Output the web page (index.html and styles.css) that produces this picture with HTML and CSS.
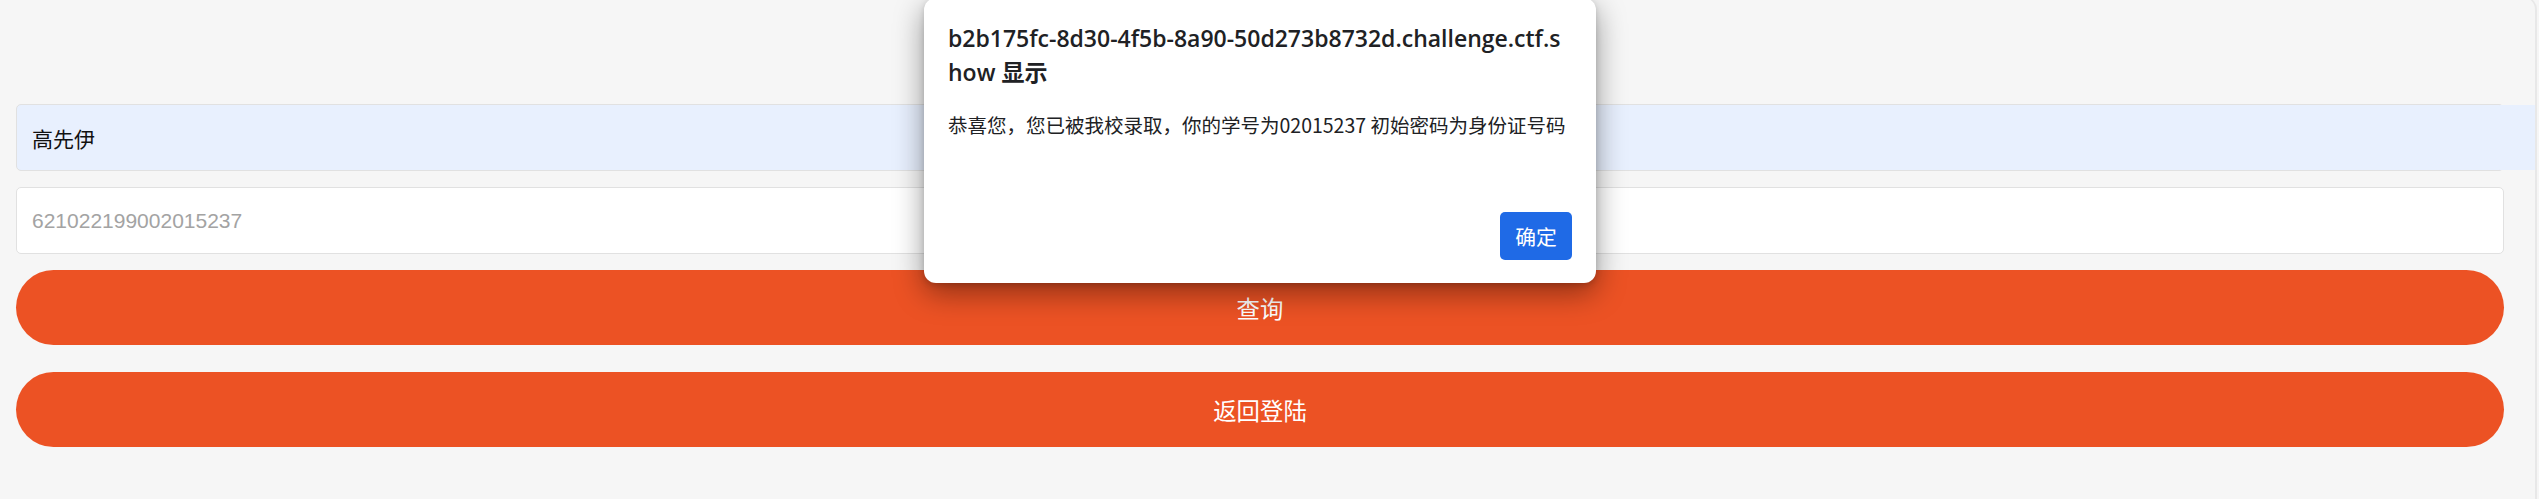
FILE: index.html
```html
<!DOCTYPE html>
<html lang="zh-CN">
<head>
    <meta charset="UTF-8">
    <meta name="viewport" content="width=device-width, initial-scale=1.0">
    <title>录取查询</title>
    <link rel="stylesheet" href="styles.css">
</head>
<body>
    <div class="page">
        <form class="query-form">
            <div class="name-row">
                <input type="text" class="field field-filled" value="高先伊">
                <span class="autofill-tail"></span>
            </div>
            <input type="text" class="field" placeholder="621022199002015237">
            <button type="button" class="btn">查询</button>
            <button type="button" class="btn btn-back">返回登陆</button>
        </form>
    </div>

    <!-- browser alert -->
    <div class="dialog">
        <h2 class="dialog-title">b2b175fc-8d30-4f5b-8a90-50d273b8732d.challenge.ctf.show 显示</h2>
        <p class="dialog-msg">恭喜您，您已被我校录取，你的学号为02015237 初始密码为身份证号码</p>
        <div class="dialog-actions">
            <button type="button" class="dialog-btn">确定</button>
        </div>
    </div>
</body>
</html>
```

FILE: styles.css
```css
body {
    margin: 0;
    background-color: #f6f6f6;
    font-family: "Liberation Sans", "Noto Sans CJK SC", sans-serif;
    height: 499px;
    overflow: hidden;
}

.page {
    box-sizing: border-box;
    width: 2537px;
    height: 503px;
    margin-top: -4px;
    border-top: 1px solid #e3e3e3;
    border-right: 2px solid #e8e8e8;
    border-top-right-radius: 14px;
    padding: 107px 31px 0 16px;
}

.query-form {
    display: flex;
    flex-direction: column;
    gap: 16px;
}

.name-row {
    display: flex;
    margin-right: -31px;
}

.name-row .field {
    flex: 1;
}

.autofill-tail {
    width: 35px;
    margin: 1px 0 1px -4px;
    background: #e8f0fe;
}

.field {
    box-sizing: border-box;
    width: 100%;
    height: 67px;
    padding: 0 15px;
    border: 1px solid #e1e1e1;
    border-radius: 5px;
    background: #fff;
    color: #111;
    font-family: inherit;
    font-size: 21px;
    outline: none;
}

.field-filled {
    background: #e8f0fe;
}

.field::placeholder {
    color: #a3a3a3;
}

.btn {
    height: 75px;
    border: none;
    border-radius: 38px;
    background: #ec5224;
    color: #fff;
    font-family: inherit;
    font-size: 23.4px;
    cursor: pointer;
}

.btn-back {
    margin-top: 11px;
}

.dialog {
    position: absolute;
    top: -2px;
    left: 924px;
    box-sizing: border-box;
    width: 672px;
    height: 285px;
    padding: 23px 24px 23px;
    background: #fff;
    border-radius: 12px;
    box-shadow: 0 10px 30px rgba(0, 0, 0, 0.4), 0 2px 6px rgba(0, 0, 0, 0.15);
    display: flex;
    flex-direction: column;
}

.dialog-title {
    margin: 0 4px 0 0;
    font-family: "Open Sans", "Noto Sans CJK SC", sans-serif;
    font-weight: 600;
    font-size: 23px;
    line-height: 34px;
    word-break: break-all;
    color: #202124;
}

.dialog-msg {
    margin: 21px 0 0;
    font-family: "Noto Sans CJK SC", sans-serif;
    font-size: 19.5px;
    line-height: 29px;
    color: #202124;
}

.dialog-actions {
    margin-top: auto;
    display: flex;
    justify-content: flex-end;
}

.dialog-btn {
    width: 72px;
    height: 48px;
    border: none;
    border-radius: 5px;
    background: #1f6ae6;
    color: #fff;
    font-family: "Noto Sans CJK SC", sans-serif;
    font-size: 20.8px;
    cursor: pointer;
}
```
